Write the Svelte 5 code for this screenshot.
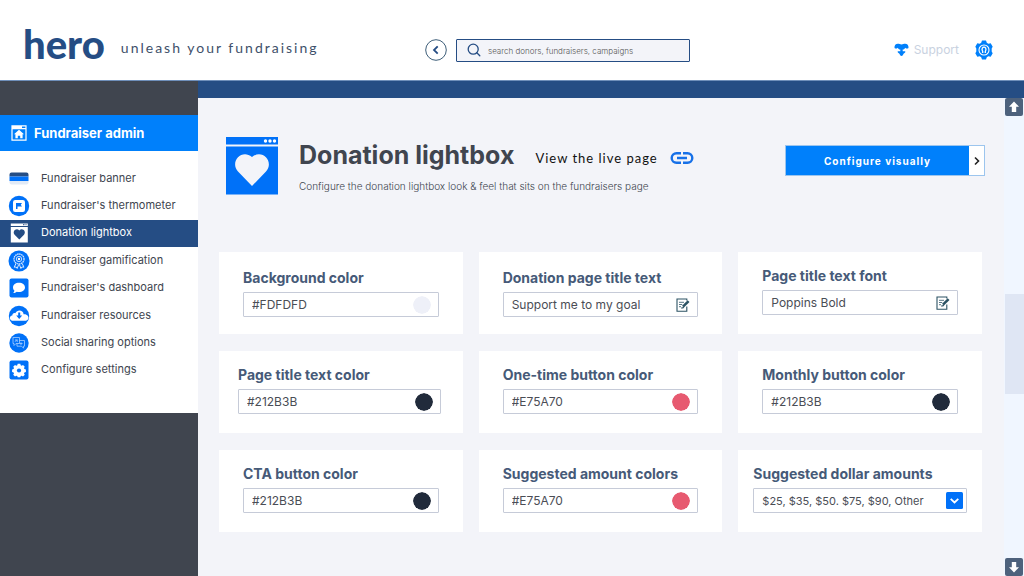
<script>
  const nav = [
    { label: 'Fundraiser banner', icon: 'banner' },
    { label: "Fundraiser's thermometer", icon: 'flag' },
    { label: 'Donation lightbox', icon: 'lightbox', active: true },
    { label: 'Fundraiser gamification', icon: 'ribbon' },
    { label: "Fundraiser's dashboard", icon: 'chat' },
    { label: 'Fundraiser resources', icon: 'cloud' },
    { label: 'Social sharing options', icon: 'social' },
    { label: 'Configure settings', icon: 'gear' }
  ];

  const cards = [
    { id: 'background', label: 'Background color', value: '#FDFDFD', color: '#eef0f8', low: true },
    { id: 'title-text', label: 'Donation page title text', value: 'Support me to my goal', edit: true, low: true },
    { id: 'title-font', label: 'Page title text font', value: 'Poppins Bold', edit: true },
    { id: 'title-color', label: 'Page title text color', value: '#212B3B', color: '#212b3b', size: 'wide' },
    { id: 'one-time', label: 'One-time button color', value: '#E75A70', color: '#e75a70' },
    { id: 'monthly', label: 'Monthly button color', value: '#212B3B', color: '#212b3b' },
    { id: 'cta', label: 'CTA button color', value: '#212B3B', color: '#212b3b' },
    { id: 'amount-colors', label: 'Suggested amount colors', value: '#E75A70', color: '#e75a70' },
    { id: 'amounts', label: 'Suggested dollar amounts', value: '$25, $35, $50. $75, $90, Other', select: true, size: 'widest' }
  ];
</script>

<div class="page">
  <header>
    <div class="brand">
      <span class="logo">hero</span>
      <span class="tagline">unleash your fundraising</span>
    </div>
    <form class="search" onsubmit={(e) => e.preventDefault()}>
      <button type="button" class="back" aria-label="Back">
        <svg width="22" height="22" viewBox="0 0 22 22" fill="none">
          <circle cx="11" cy="11" r="10.3" stroke="#3f5f7a" />
          <path d="M12.7 7.3 9 11l3.7 3.7" stroke="#254d84" stroke-width="1.8" />
        </svg>
      </button>
      <div class="searchbox">
        <svg width="14" height="14" viewBox="0 0 14 14" fill="none" stroke="#254d84" stroke-width="1.3">
          <circle cx="6.2" cy="6.2" r="5" />
          <path d="m9.8 9.8 3 3" stroke-linecap="round" />
        </svg>
        <input type="search" aria-label="Search" placeholder="search donors, fundraisers, campaigns" />
      </div>
    </form>
    <div class="account">
      <a class="support" href="#support">
        <svg width="15" height="14" viewBox="0 0 15 14" fill="#0080fb">
          <path d="M.5 5C.2 2.300 1.800.8 3.800.8c1.500 0 2.300.7 3.700.7s2.200-.7 3.700-.7c2 0 3.600 1.500 3.300 4.200-1.200.9-2.400.7-3.300-.3-.5 1.200-1.200 1.700-2.300 1.900H6.100C5 6.400 4.300 5.900 3.800 4.700 2.900 5.700 1.700 5.900.5 5Z" />
          <path d="M6.300 6h2.400v2.200h2c.7 0 .9.700.4 1.200L9.300 11c0 1-.8 1.900-1.800 1.900S5.700 12 5.700 11L3.900 9.400c-.5-.5-.3-1.200.4-1.200h2Z" />
        </svg>
        <span>Support</span>
      </a>
      <button type="button" aria-label="Account settings">
        <svg width="20" height="20" viewBox="0 0 20 20">
          <path d="M8 .6h4l.8 2.200 1.500.9 2.400-.4 2 3.400-1 1.900v2.800l1 1.900-2 3.400-2.400-.4-1.500.9-.8 2.200H8l-.8-2.200-1.500-.9-2.400.4-2-3.400 1-1.900V8.600l-1-1.900 2-3.400 2.400.4 1.500-.9Z" fill="#0080fb" />
          <circle cx="10" cy="10" r="5" fill="none" stroke="#fff" stroke-width="1.100" />
          <path d="M8.700 13v-1.500c-1.600-3 0-4.300 1.300-4.300s2.900 1.300 1.300 4.300V13" fill="none" stroke="#fff" stroke-width="1.300" />
        </svg>
      </button>
    </div>
  </header>

  <div class="body">
    <aside>
      <div class="admin">
        <svg width="16" height="16" viewBox="0 0 16 16">
          <path d="M1 .8h14v14.400H1ZM1 3.700h14" fill="none" stroke="#fff" stroke-width="1.200" />
          <path d="M1 1h10v2.400H1Z" fill="#fff" />
          <path d="m8 4.800 5 4.500h-1.400v4H9.200v-2.600H6.800v2.600H4.400v-4H3Z" fill="#fff" />
        </svg>
        <span>Fundraiser admin</span>
      </div>
      <nav aria-label="Fundraiser admin">
        <ul>
          {#each nav as item}
            <li>
              <a href="#{item.icon}" class:active={item.active} aria-current={item.active ? 'page' : undefined}>
                <svg width="22" height="22" viewBox="0 0 22 22">
                  {#if item.icon === 'banner'}
                    <path d="M1.500 8V6.500a2 2 0 0 1 2-2h15a2 2 0 0 1 2 2V8.500h-19Z" fill="#254d84" />
                    <path d="M1.500 8.500h19V13h-19Z" fill="#0071f8" />
                    <path d="M1.500 13h19v1.500a2 2 0 0 1-2 2h-15a2 2 0 0 1-2-2Z" fill="#e1eaf6" />
                  {:else if item.icon === 'flag'}
                    <circle cx="11" cy="11" r="10.200" fill="#0071f8" />
                    <rect x="5" y="5" width="12" height="12" rx="2.200" fill="#fff" />
                    <path d="M8 8h6l-1.200 1.800 1.200 1.800H9.500V14H8Z" fill="#0071f8" />
                  {:else if item.icon === 'lightbox'}
                    <path d="M2.800 1.500h17v2.600h-17ZM2.800 5h17v15.500h-17Z" fill="#fff" />
                    <path d="M15 2.700h3.500" stroke="#254d84" stroke-dasharray="1 .5" />
                    <path d="m11.300 17.600-4.700-4.900c-2.800-3.300 1.700-7.500 4.700-4.300 3-3.200 7.500 1 4.700 4.300Z" fill="#254d84" />
                  {:else if item.icon === 'ribbon'}
                    <circle cx="11" cy="11" r="10.500" fill="#0071f8" />
                    <g fill="none" stroke="#d5e7ff">
                      <circle cx="11" cy="9" r="5" stroke-width="1.300" stroke-dasharray="1.600 .5" />
                      <circle cx="11" cy="9" r="2.700" stroke-width=".9" />
                      <path d="m8 13.500-1.800 3.700 2-.2 1 1.500 1.500-4m3.500-1 1.700 3.700-2-.2-1 1.500-1.500-4" stroke-width="1" />
                    </g>
                    <circle cx="11" cy="9" r="1.200" fill="#fff" />
                  {:else if item.icon === 'chat'}
                    <rect x="1.500" y="1.500" width="19" height="19" rx="2" fill="#0071f8" />
                    <path d="M11 5.800c3.400 0 6 2 6 4.600S14.400 15 11 15c-.8 0-1.500-.1-2.200-.3-1 .9-2.200 1.300-3.600 1.300.8-.8 1.200-1.500 1.200-2.500C5.500 12.600 5 11.600 5 10.400c0-2.600 2.600-4.600 6-4.600Z" fill="#fff" />
                  {:else if item.icon === 'cloud'}
                    <circle cx="11" cy="11" r="10.200" fill="#0071f8" />
                    <path d="M5.500 15.800c-4.500 0-4.700-5-1.200-5.400.2-2 1.800-2.600 3-2.200 2-4 8-3.200 8.300 1 3.600-.4 5.600 2.400 4.600 4.600-.6 1.400-1.700 2-3.200 2Z" fill="#fff" />
                    <path d="M10.200 7.500h2v3h2l-3 3.500-3-3.500h2Z" fill="#0071f8" />
                  {:else if item.icon === 'social'}
                    <circle cx="11" cy="11" r="9.700" fill="#0071f8" />
                    <g fill="none" stroke="#a7ceff" stroke-width=".8">
                      <path d="M5 5.500h6.500v6H8l-2 2v-2H5ZM11.500 8.500h5v5.700h-1v2l-2-2H9v-2.700" />
                      <path d="M7 9.800 9.200 7.500M7 8h2.200v2M11.500 11.500h3M13 10.300v2.700" />
                    </g>
                  {:else}
                    <rect x="1.500" y="1.500" width="19" height="19" rx="2" fill="#0071f8" />
                    <path d="M9.700 4.800h2.600l.4 1.500 1 .4 1.300-.8 1.800 1.800-.8 1.300.4 1 1.500.4v2.600l-1.500.4-.4 1 .8 1.300-1.800 1.800-1.300-.8-1 .4-.4 1.200H9.700l-.4-1.200-1-.4-1.300.8-1.800-1.800.8-1.300-.4-1-1.500-.4v-2.600l1.500-.4.4-1-.8-1.300L7 5.900l1.300.8 1-.4Z" fill="#fff" />
                    <circle cx="11" cy="11.500" r="2.100" fill="#0071f8" />
                  {/if}
                </svg>
                <span>{item.label}</span>
              </a>
            </li>
          {/each}
        </ul>
      </nav>
    </aside>

    <div class="main">
      <div class="bar"></div>
      <div class="view">
        <main>
          <section class="intro">
            <svg width="52" height="58" viewBox="0 0 52 58">
              <path d="M0 0h52v7.500H0ZM0 9.600h52V57.500H0Z" fill="#0071f8" />
              <g fill="#fff"><circle cx="39.500" cy="4" r="1.700" /><circle cx="44" cy="4" r="1.700" /><circle cx="48.500" cy="4" r="1.700" /></g>
              <path d="M26 49 12 34.500C3.500 25 15.500 11.500 26 20c10.500-8.500 22.500 5 14 14.500Z" fill="#f3f4f9" />
            </svg>
            <div class="heading">
              <div class="titleline">
                <h1>Donation lightbox</h1>
                <a href="#live">
                  <span>View the live page</span>
                  <svg width="24" height="14" viewBox="0 0 24 14" fill="none" stroke="#1670e8" stroke-width="2.400">
                    <path d="M11 2.200H6.500a4.800 4.800 0 0 0 0 9.600H11M13 2.200h4.500a4.800 4.800 0 0 1 0 9.600H13M7 7h10" />
                  </svg>
                </a>
              </div>
              <p>Configure the donation lightbox look &amp; feel that sits on the fundraisers page</p>
            </div>
            <div class="configure">
              <button type="button" class="primary">Configure visually</button>
              <button type="button" class="more" aria-label="More options">
                <svg width="8" height="10" viewBox="0 0 8 10" fill="none" stroke="#222" stroke-width="1.600">
                  <path d="m2 1.500 3.500 3.500L2 8.500" />
                </svg>
              </button>
            </div>
          </section>

          <section class="grid" aria-label="Lightbox settings">
            {#each cards as card}
              <div class="card {card.size ?? ''}" class:low={card.low}>
                <label for={card.id}>{card.label}</label>
                <div class="field">
                  {#if card.select}
                    <select id={card.id}><option>{card.value}</option></select>
                    <svg class="drop" width="17" height="17" viewBox="0 0 17 17">
                      <rect width="17" height="17" rx="1.500" fill="#0071f8" />
                      <path d="m4.700 6.800 3.800 3.600 3.800-3.600" fill="none" stroke="#fff" stroke-width="1.800" />
                    </svg>
                  {:else}
                    <input type="text" id={card.id} value={card.value} />
                    {#if card.edit}
                      <button type="button" aria-label="Edit {card.label}">
                        <svg width="14" height="14" viewBox="0 0 14 14" fill="none" stroke="#2c5364">
                          <path d="M10.800 2.500V1H1v12.300h9.800V8.500" stroke-width="1.100" />
                          <path d="M3 4.300h5M3 6.500h3.200M3 8.700h2" stroke-width=".8" />
                          <path d="m7 8.700 5.600-5.600" stroke-width="2.600" />
                          <path d="M5.300 10.200 8 9.500" stroke-width="1.200" />
                        </svg>
                      </button>
                    {:else}
                      <input type="color" value={card.color} aria-label="{card.label} swatch" />
                    {/if}
                  {/if}
                </div>
              </div>
            {/each}
          </section>
        </main>

        <div class="scroll">
          <button type="button" aria-label="Scroll up">
            <svg width="18" height="18" viewBox="0 0 18 18">
              <rect width="18" height="18" rx="2" fill="#4d617c" />
              <path d="m9 3.500 5 5.200h-2.800v5.300H6.800V8.700H4Z" fill="#fff" />
            </svg>
          </button>
          <div class="track"><div class="before"></div><div class="thumb"></div><div class="after"></div></div>
          <button type="button" aria-label="Scroll down">
            <svg width="18" height="18" viewBox="0 0 18 18">
              <rect width="18" height="18" rx="2" fill="#4d617c" />
              <path d="m9 14.500 5-5.200h-2.800V4H6.800v5.300H4Z" fill="#fff" />
            </svg>
          </button>
        </div>
      </div>
    </div>
  </div>
</div>

<style>
  :global(body) { margin: 0; }
  .page {
    min-height: 100vh;
    display: flex;
    flex-direction: column;
    font-family: Inter, sans-serif;
    color: #40454f;
    background: #f3f4f9;
  }
  .page * { box-sizing: border-box; }
  svg { display: block; flex: none; }
  a { color: inherit; text-decoration: none; }
  button { font: inherit; padding: 0; border: 0; background: none; }

  header {
    display: flex;
    align-items: center;
    padding: 20px 30px 0 23px;
    background: #fff;
    border-bottom: 1px solid #6f8fba;
  }
  .brand { flex: 0 0 402px; display: flex; align-items: center; gap: 16px; }
  .logo { font: 900 40px/48px Lato, sans-serif; color: #254d84; padding-bottom: 12px; }
  .tagline { font: 14px/20px Lato, sans-serif; letter-spacing: 2px; color: #40506a; padding-bottom: 4px; }
  .search { display: flex; align-items: center; gap: 9px; flex: 0 1 265px; }
  .searchbox {
    flex: 1;
    display: flex;
    align-items: center;
    gap: 7px;
    height: 23px;
    padding: 0 10px;
    background: #f3f4f9;
    border: 1px solid #254d84;
    border-radius: 1px;
  }
  .searchbox input {
    flex: 1;
    min-width: 0;
    padding: 2px 0 0;
    border: 0;
    outline: 0;
    background: none;
    font: 300 8px/12px Inter, sans-serif;
    color: #333;
  }
  .searchbox input::placeholder { color: #555; opacity: 1; }
  .account { margin-left: auto; display: flex; align-items: center; gap: 15px; }
  .support { display: flex; align-items: center; gap: 5px; font-size: 12px; line-height: 16px; color: #c9d2df; }

  .body { flex: 1; display: flex; }
  aside { flex: 0 0 198px; background: #40454f; padding-top: 34px; }
  .admin {
    display: flex;
    align-items: center;
    gap: 7px;
    padding: 10px 11px;
    background: #0080fb;
    color: #fff;
    font-size: 13px;
    font-weight: 700;
    line-height: 16px;
  }
  nav { background: #fff; padding: 14px 0 29px; }
  ul { list-style: none; margin: 0; padding: 0; display: grid; grid-auto-rows: 1fr; min-height: 219px; }
  li { display: grid; }
  li a {
    display: flex;
    align-items: center;
    gap: 11px;
    padding: 0 8px;
    font-size: 11px;
    line-height: 16px;
  }
  li a span { padding-bottom: 2px; }
  li a.active { background: #254d84; color: #fff; }

  .main { flex: 1; min-width: 0; display: flex; flex-direction: column; }
  .bar { height: 17px; background: #254d84; }
  .view { flex: 1; display: flex; }
  main { flex: 1; min-width: 0; padding: 39px 19px 43px 21px; }
  .intro { display: flex; gap: 21px; padding-left: 7px; margin-bottom: 57px; }
  .heading { flex: 1; min-width: 0; }
  .titleline { display: flex; align-items: center; gap: 21px; white-space: nowrap; }
  h1 { margin: 0; font-size: 25px; line-height: 36px; font-weight: 700; }
  .titleline a { display: flex; align-items: center; gap: 12px; padding-top: 6px; font: 13px/16px Lato, sans-serif; letter-spacing: 1px; color: #111; }
  .heading p { margin: 5px 0 0; font-size: 10px; font-weight: 300; line-height: 16px; white-space: nowrap; }
  .configure { flex: 0 0 200px; align-self: flex-start; margin-top: 8px; display: flex; height: 31px; border: 1px solid #9cc5ee; }
  .primary { flex: 1; background: #0080fb; color: #fff; font-size: 10px; font-weight: 700; letter-spacing: 1px; }
  .more { flex: 0 0 15px; display: grid; place-items: center; background: #fff; }

  .grid { display: grid; grid-template-columns: repeat(3, minmax(0, 1fr)); gap: 17px 16px; margin-right: 3px; }
  .card { background: #fff; padding: 14px 24px 19px; }
  .card.low { padding-top: 16px; padding-bottom: 17px; }
  .card.wide { padding-left: 19px; padding-right: 22px; }
  .card.widest { padding-left: 15px; padding-right: 15px; }
  .card label { display: block; font-size: 14px; line-height: 20px; font-weight: 700; color: #465a78; margin-bottom: 4px; white-space: nowrap; }
  .field {
    display: flex;
    align-items: center;
    height: 25px;
    padding: 0 7px 0 8px;
    border: 1px solid #c6cbd8;
    border-radius: 1px;
    position: relative;
  }
  .field input[type='text'],
  .field select {
    flex: 1;
    min-width: 0;
    padding: 0;
    border: 0;
    outline: 0;
    background: none;
    appearance: none;
    font: 12px/16px Inter, sans-serif;
    color: #4a4d55;
  }
  .field input[type='color'] { width: 18px; height: 18px; padding: 0; border: 0; background: none; appearance: none; border-radius: 50%; overflow: hidden; }
  .field input[type='color']::-webkit-color-swatch-wrapper { padding: 0; }
  .field input[type='color']::-webkit-color-swatch { border: 0; border-radius: 50%; }
  .field select { font-size: 11px; }
  .drop { pointer-events: none; position: absolute; right: 3px; }

  .scroll { flex: 0 0 20px; display: flex; flex-direction: column; background: #f0f6ff; padding-left: 1px; }
  .track { flex: 1; display: flex; flex-direction: column; }
  .before { flex: 178; }
  .thumb { flex: 101; background: #dfe6f4; }
  .after { flex: 164; }
</style>
